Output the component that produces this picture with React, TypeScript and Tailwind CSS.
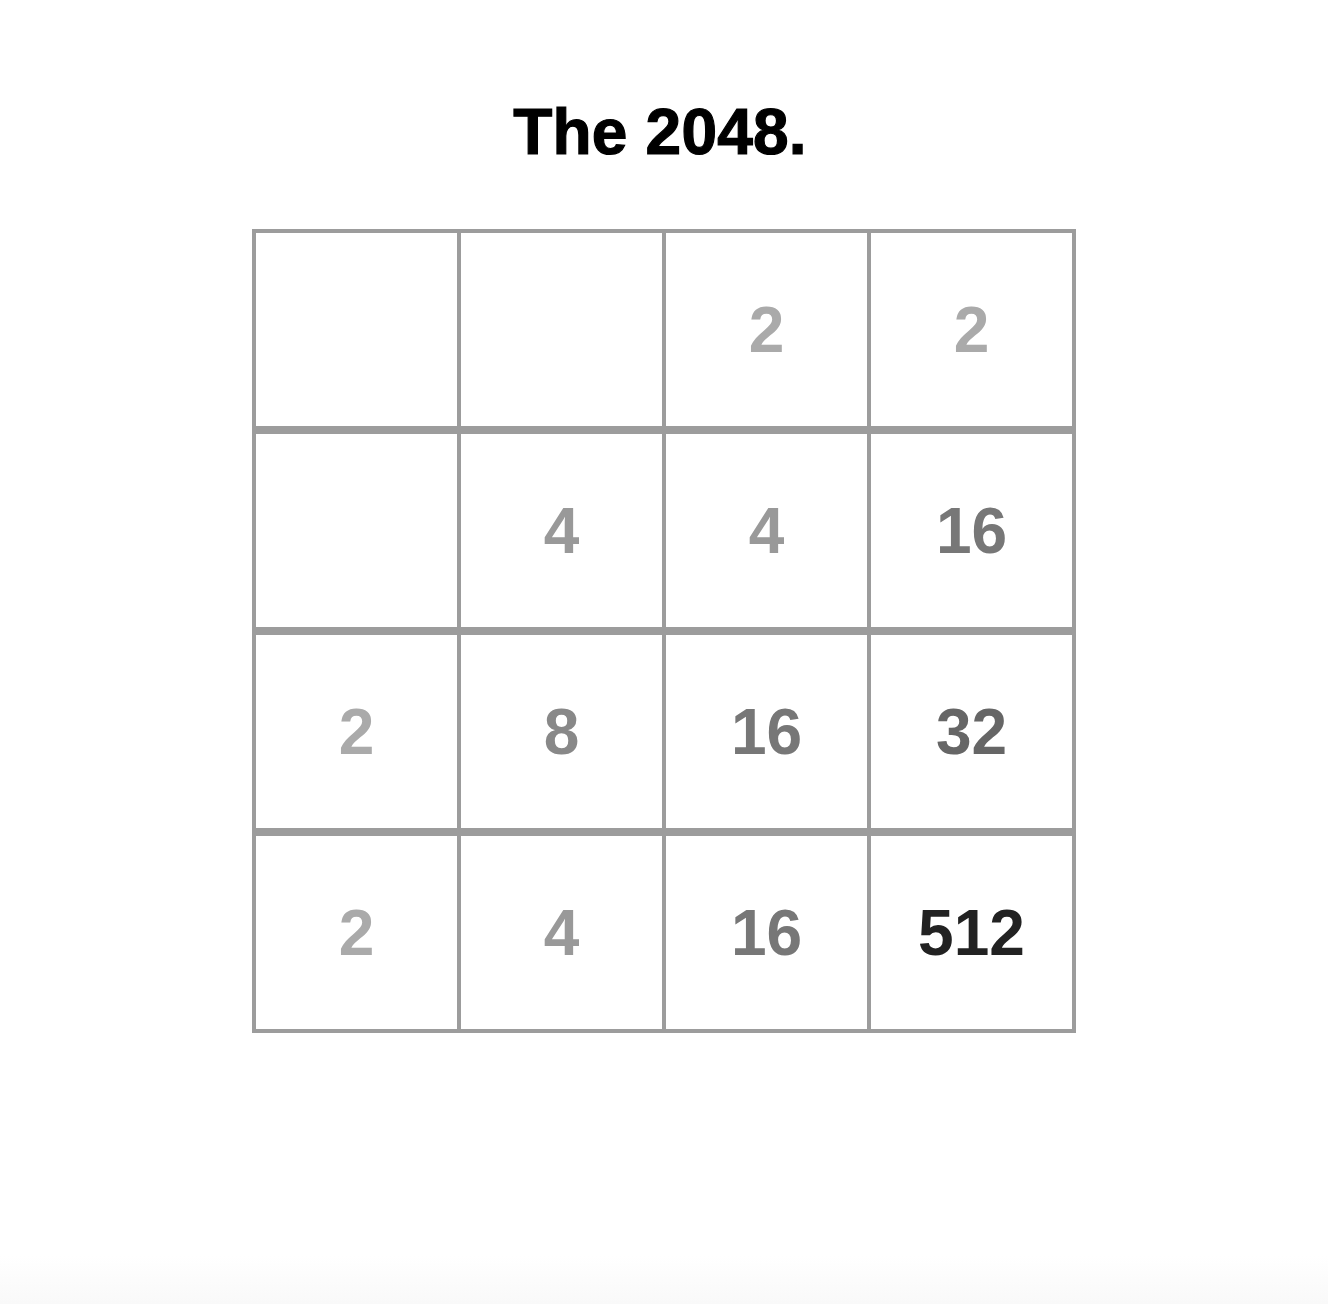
const board: (number | null)[][] = [
  [null, null, 2, 2],
  [null, 4, 4, 16],
  [2, 8, 16, 32],
  [2, 4, 16, 512],
]

// tile colour darkens as the value grows
function tileColor(value: number) {
  switch (value) {
    case 2:
      return 'text-[#aaaaaa]'
    case 4:
      return 'text-[#999999]'
    case 8:
      return 'text-[#888888]'
    case 16:
      return 'text-[#777777]'
    case 32:
      return 'text-[#666666]'
    default:
      return 'text-[#222222]'
  }
}

export default function App() {
  return (
    <div className="flex min-h-screen flex-col bg-white font-['Liberation_Sans',Arial,sans-serif]">
      <main className="flex flex-1 flex-col items-center pt-[100px]">
        <h1 className="mb-[65px] mr-[8px] text-[64px] font-bold leading-[64px] tracking-[0.2px] text-black [-webkit-text-stroke:1.2px_black]">
          The 2048.
        </h1>

        {/* Board */}
        <div className="grid grid-cols-[repeat(4,201px)] grid-rows-[repeat(4,193px)] gap-x-[4px] gap-y-[8px] bg-[#9c9c9c] p-[4px]">
          {board.flat().map((value, i) => (
            <div key={i} className="flex items-center justify-center bg-white">
              {value !== null && (
                <span className={`text-[64px] font-bold leading-none ${tileColor(value)}`}>
                  {value}
                </span>
              )}
            </div>
          ))}
        </div>
      </main>

      <div className="h-[48px] bg-gradient-to-b from-white to-[#f9f9f9]" />
    </div>
  )
}
